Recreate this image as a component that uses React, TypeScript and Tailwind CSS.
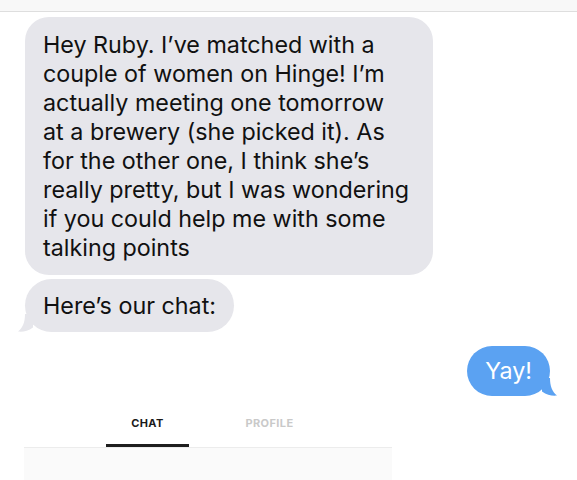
import React from 'react'

function TailLeft() {
  return (
    <svg
      className="absolute bottom-0 left-[-7px]"
      width="16"
      height="18"
      viewBox="0 0 16 18"
      fill="#e6e6eb"
    >
      <path d="M7 0 C7 8 5 13.5 0 17.6 C5 18.2 10 17 15 13.5 L15 0 Z" />
    </svg>
  )
}

function TailRight() {
  return (
    <svg
      className="absolute right-[-7px] bottom-0"
      width="16"
      height="18"
      viewBox="0 0 16 18"
      fill="#5ba2f2"
    >
      <path d="M9 0 C9 8 11 13.5 16 17.6 C11 18.2 6 17 1 13.5 L1 0 Z" />
    </svg>
  )
}

const lines = [
  'Hey Ruby. I’ve matched with a',
  'couple of women on Hinge! I’m',
  'actually meeting one tomorrow',
  'at a brewery (she picked it). As',
  'for the other one, I think she’s',
  'really pretty, but I was wondering',
  'if you could help me with some',
  'talking points',
]

export default function App() {
  return (
    <div
      className="relative h-[480px] w-[577px] overflow-hidden bg-white text-[#111]"
      style={{ fontFamily: 'Inter, "Noto Sans", sans-serif' }}
    >
      {/* Top bar */}
      <div className="h-[12px] border-b border-[#dedede] bg-[#f8f8f8]" />

      {/* Messages */}
      <div className="flex flex-col pt-[5px] pl-[25px]">
        <div className="w-[408px] rounded-[24px] bg-[#e6e6eb] px-[18px] pt-[13px] pb-[13px] text-[23.3px] leading-[29px] whitespace-nowrap">
          {lines.map((l) => (
            <div key={l}>{l}</div>
          ))}
        </div>

        <div className="relative mt-[4px] self-start">
          <div className="rounded-[27px] bg-[#e6e6eb] px-[18px] py-[12px] text-[23.3px] leading-[29px]">
            Here’s our chat:
          </div>
          <TailLeft />
        </div>
      </div>

      <div className="mt-[14px] flex justify-end pr-[27px]">
        <div className="relative">
          <div className="rounded-[25px] bg-[#5ba2f2] px-[18px] py-[10px] text-[23.3px] leading-[30px] text-white">
            Yay!
          </div>
          <TailRight />
        </div>
      </div>

      {/* Tabs */}
      <div className="mt-[3px] ml-[24px] w-[368px]">
        <div className="flex gap-[39px] pl-[82px]">
          <div className="flex h-[48px] w-[83px] flex-col items-center justify-between pt-[16px]">
            <span className="text-[11px] leading-[16px] font-bold tracking-[0.4px] text-[#1a1a1a]">
              CHAT
            </span>
            <div className="h-[3px] w-full bg-[#1e1e1e]" />
          </div>
          <div className="flex h-[48px] w-[83px] flex-col items-center pt-[16px]">
            <span className="text-[11px] leading-[16px] font-bold tracking-[0.4px] text-[#c9c9c9]">
              PROFILE
            </span>
          </div>
        </div>
        <div className="h-[1px] bg-[#ececec]" />
        <div className="h-[40px] bg-[#fafafa]" />
      </div>
    </div>
  )
}
